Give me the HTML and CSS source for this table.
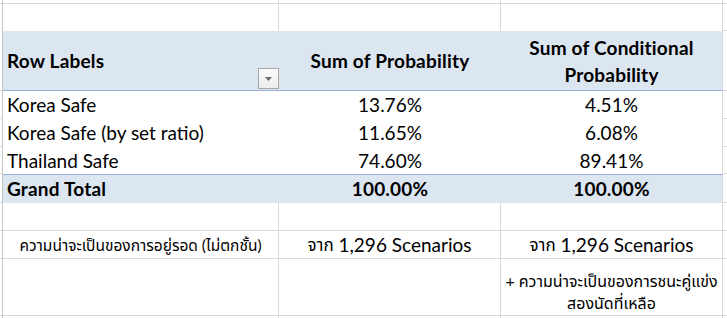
FILE: index.html
```html
<!DOCTYPE html>
<html lang="th">
<head>
<meta charset="utf-8">
<title>Pivot</title>
<link rel="stylesheet" href="styles.css">
</head>
<body>
<div class="sheet">
  <!-- row 0 -->
  <div class="c ga gb"></div>
  <div class="c gr gb"></div>
  <div class="c gr gb"></div>
  <div class="c gr gb"></div>
  <div class="c gb"></div>
  <!-- row 1 -->
  <div class="c ga"></div>
  <div class="c gr"></div>
  <div class="c gr"></div>
  <div class="c gr"></div>
  <div class="c gb"></div>
  <!-- header -->
  <div class="c ga gb"></div>
  <div class="c hd left filter-cell"><span>Row Labels</span><span class="dropdown"><svg width="7" height="4" viewBox="0 0 7 4"><path d="M0 0H7L3.5 4Z" fill="#6a6a6a"/></svg></span></div>
  <div class="c hd center"><span>Sum of Probability</span></div>
  <div class="c hd center gr"><span class="two">Sum of Conditional<br>Probability</span></div>
  <div class="c gb"></div>
  <!-- data rows -->
  <div class="c ga gb"></div>
  <div class="c left">Korea Safe</div>
  <div class="c center">13.76%</div>
  <div class="c center gr">4.51%</div>
  <div class="c gb"></div>

  <div class="c ga gb"></div>
  <div class="c left">Korea Safe (by set ratio)</div>
  <div class="c center">11.65%</div>
  <div class="c center gr">6.08%</div>
  <div class="c gb"></div>

  <div class="c ga gb"></div>
  <div class="c left">Thailand Safe</div>
  <div class="c center">74.60%</div>
  <div class="c center gr">89.41%</div>
  <div class="c gb"></div>
  <!-- grand total -->
  <div class="c ga gb"></div>
  <div class="c tot left">Grand Total</div>
  <div class="c tot center">100.00%</div>
  <div class="c tot center gr">100.00%</div>
  <div class="c gb"></div>
  <!-- empty -->
  <div class="c ga gb"></div>
  <div class="c gr gb"></div>
  <div class="c gr gb"></div>
  <div class="c gr gb"></div>
  <div class="c gb"></div>
  <!-- thai row -->
  <div class="c ga gb"></div>
  <div class="c gr gb center"><span class="thl">ความน่าจะเป็นของการอยู่รอด (ไม่ตกชั้น)</span></div>
  <div class="c gr gb center"><span class="th">จาก</span>&nbsp;1,296 Scenarios</div>
  <div class="c gr gb center"><span class="th">จาก</span>&nbsp;1,296 Scenarios</div>
  <div class="c gb"></div>
  <!-- wrap row -->
  <div class="c ga gb"></div>
  <div class="c gr gb"></div>
  <div class="c gr gb"></div>
  <div class="c gr gb center wrapcell"><span class="thw wrap">+ ความน่าจะเป็นของการชนะคู่แข่ง<br>สองนัดที่เหลือ</span></div>
  <div class="c gb"></div>
  <!-- last -->
  <div class="c ga"></div>
  <div class="c gr"></div>
  <div class="c gr"></div>
  <div class="c gr"></div>
  <div class="c"></div>
</div>
</body>
</html>
```
FILE: styles.css
```css
html, body {
  margin: 0;
  padding: 0;
  background: #ffffff;
}
body {
  width: 727px;
  height: 318px;
  overflow: hidden;
  font-family: Lato, "Noto Sans Thai", "Noto Sans", sans-serif;
  font-size: 19px;
  color: #000000;
}
.sheet {
  display: grid;
  grid-template-columns: 3px 276px 222px 222px 1fr;
  grid-template-rows: 4px 27px 60px 28px 28px 27px 29px 28px 28px 57px 1fr;
  height: 318px;
}
.c {
  box-sizing: border-box;
  display: flex;
  align-items: center;
  min-width: 0;
  white-space: nowrap;
  line-height: 24px;
}
.ga { border-right: 1px solid #c6c6c6; }
.gr { border-right: 1px solid #d9d9d9; }
.gb { border-bottom: 1px solid #d9d9d9; }
.left { justify-content: flex-start; padding-left: 4px; }
.center { justify-content: center; text-align: center; }
.hd {
  background: #dce6f1;
  border-bottom: 1px solid #95b3d7;
  font-weight: 700;
  letter-spacing: 0.2px;
}
.tot {
  background: #dce6f1;
  border-top: 1px solid #95b3d7;
  font-weight: 700;
  letter-spacing: 0.2px;
}
.two { line-height: 27px; }
.filter-cell { position: relative; }
.dropdown {
  position: absolute;
  right: 0;
  bottom: 1px;
  box-sizing: border-box;
  width: 21px;
  height: 21px;
  border: 1px solid #a6a6a6;
  background: linear-gradient(#fbfbfb, #ececec);
  display: flex;
  align-items: center;
  justify-content: center;
}
.th { font-size: 17px; }
.thl { font-size: 15.5px; }
.thw { font-size: 16px; }
.wrapcell { padding-top: 9px; }
.wrap { line-height: 22px; white-space: nowrap; }
```
